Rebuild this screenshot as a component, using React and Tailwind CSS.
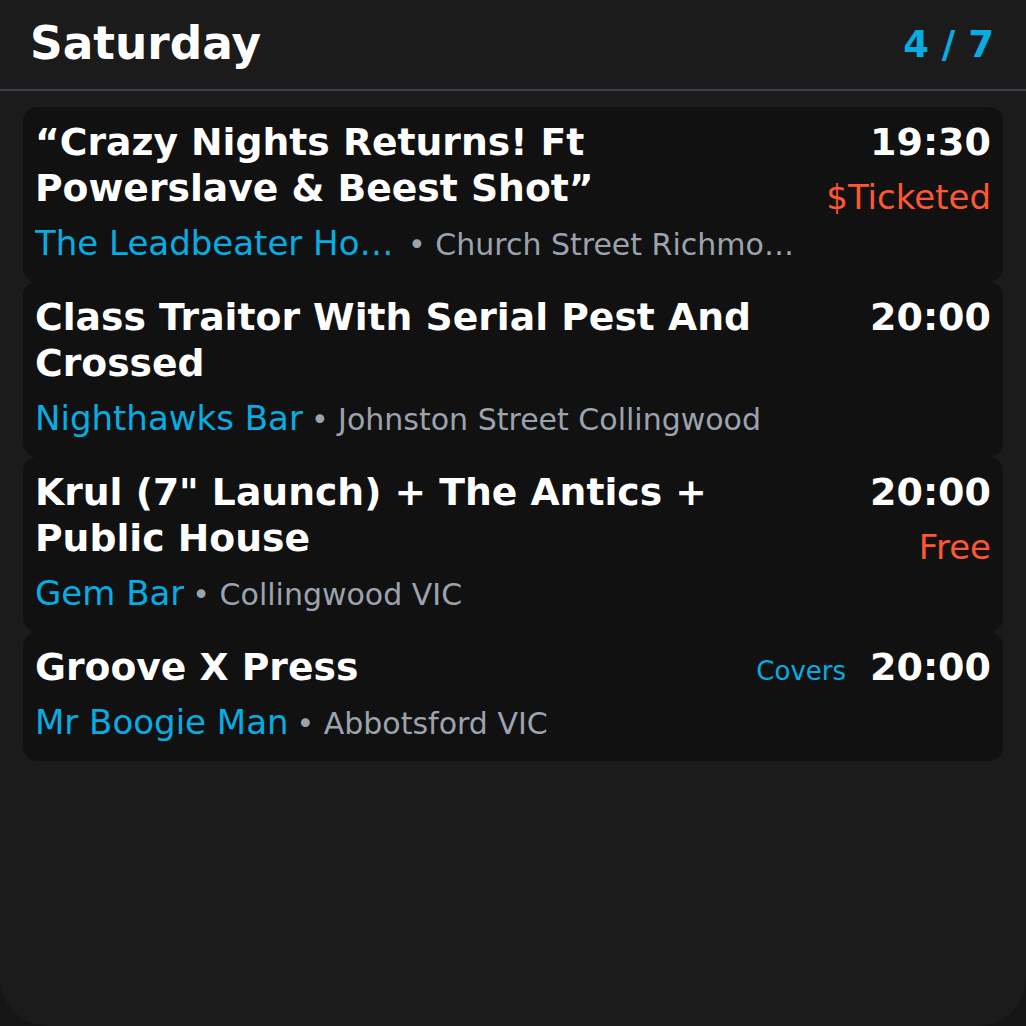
import React from "react";

const events = [
  {
    title: "“Crazy Nights Returns! Ft Powerslave & Beest Shot”",
    venue: "The Leadbeater Hotel",
    address: "• Church Street Richmond VIC",
    time: "19:30",
    price: "$Ticketed",
  },
  {
    title: "Class Traitor With Serial Pest And Crossed",
    venue: "Nighthawks Bar",
    address: "• Johnston Street Collingwood",
    time: "20:00",
  },
  {
    title: 'Krul (7" Launch) + The Antics + Public House',
    venue: "Gem Bar",
    address: "• Collingwood VIC",
    time: "20:00",
    price: "Free",
  },
  {
    title: "Groove X Press",
    venue: "Mr Boogie Man",
    address: "• Abbotsford VIC",
    time: "20:00",
    tag: "Covers",
  },
];

function Card({ e }) {
  return (
    <div className="flex gap-6 rounded-[14px] bg-[#111111] p-3">
      <div className="flex min-w-0 flex-1 flex-col">
        <div className="text-[37.7px] font-bold leading-[46px] text-white">{e.title}</div>
        <div className="mt-[7px] flex min-w-0 items-baseline gap-2 leading-[51px]">
          <span className="max-w-[365px] shrink-0 truncate text-[34px] text-[#06ade3]">{e.venue}</span>
          <span className="min-w-0 truncate text-[30px] text-[#9ca3af]">{e.address}</span>
        </div>
      </div>
      <div className="flex shrink-0 flex-col items-end">
        <div className="flex items-baseline gap-6">
          {e.tag && <span className="text-[26px] text-[#06ade3]">{e.tag}</span>}
          <span className="text-[38px] font-bold leading-[46px] text-white">{e.time}</span>
        </div>
        {e.price && (
          <div className="mt-[7px] text-[34px] leading-[51px] text-[#ff5733]">{e.price}</div>
        )}
      </div>
    </div>
  );
}

export default function App() {
  return (
    <div className="h-[1026px] w-[1026px] bg-[#151515]" style={{ fontFamily: '"DejaVu Sans", sans-serif' }}>
      <div className="h-full w-full rounded-b-[48px] bg-[#1b1b1b]">
        <div className="flex h-[91px] items-center justify-between border-b-2 border-[#3a404b] pl-[30px] pr-[32px]">
          <span className="text-[45.4px] font-bold text-white">Saturday</span>
          <span className="text-[37px] font-bold text-[#06ade3]">4 / 7</span>
        </div>
        <div className="mx-[23px] mt-4 flex flex-col">
          {events.map((e, i) => (
            <Card key={i} e={e} />
          ))}
        </div>
      </div>
    </div>
  );
}
